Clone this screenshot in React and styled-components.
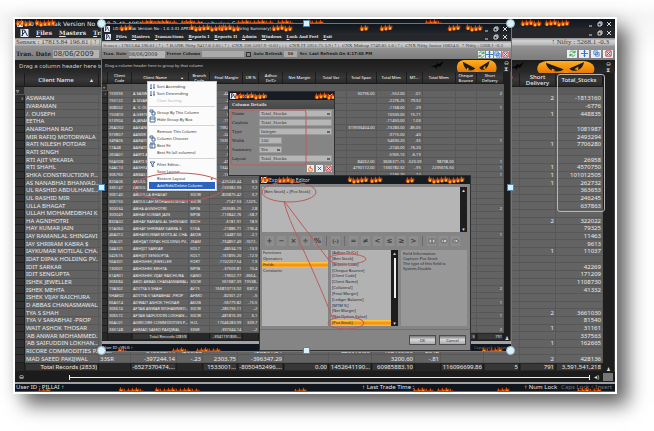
import React from 'react'
import styled, { createGlobalStyle, css } from 'styled-components'

const names = [
    ['A EASWARAN', 'ASWARAN'],
    ['A SIVARAMAN', 'IVARAMAN'],
    ['A. V. OUSEPH', '/. OUSEPH'],
    ['A.GEETHA', 'EETHA'],
    ['A.JANARDHAN RAO', 'ANARDHAN RAO'],
    ['AAKANKSHA SHAH', null],
    ['AAMIR RAFIQ MOTORWALA', 'MIR RAFIQ MOTORWALA'],
    ['AARATI NILESH POTDAR', 'RATI NILESH POTDAR'],
    ['AARATI SINGH', 'RATI SINGH'],
    ['AARTI AJIT VEKARIA', 'RTI AJIT VEKARIA'],
    ['AARTI SHAHL', 'RTI SHAHL'],
    ['AASHKA CONSTRUCTION P...', 'SHKA CONSTRUCTION P...'],
    ['ABBAS NANABHAI BHANVAD...', 'AS NANABHAI BHANVAD...'],
    ['ABDUL RASHID ABDULHAMI...', 'UL RASHID ABDULHAMI...'],
    ['ABDUL RASHID MIR', 'UL RASHID MIR'],
    ['ABDULLA BHAGAT', 'ULLA BHAGAT'],
    ['ABDULLAH MOHAMEDBHAI K...', 'ULLAH MOHAMEDBHAI K...'],
    ['ABHA AGNIHOTRI', 'HA AGNIHOTRI'],
    ['ABHAY KUMAR JAIN', 'HAY KUMAR JAIN'],
    ['ABHAY RAMANLAL SHINGAVI', 'IAY RAMANLAL SHINGAVI'],
    ['ABHAY SHRIRAM KABRA $', 'IAY SHRIRAM KABRA $'],
    ['ABHAYKUMAR MOTILAL CHA...', 'IAYKUMAR MOTILAL CHA...'],
    ['ABHIJAT DIPAK HOLDING PV...', 'IDAT DIPAK HOLDING PV...'],
    ['ABHIJIT SARKAR', 'IDIT SARKAR'],
    ['ABHIJIT SENGUPTA', 'IDIT SENGUPTA'],
    ['ABHISHEK JEWELLER', 'ISHEK JEWELLER'],
    ['ABHISHEK MEHTA', 'ISHEK MEHTA'],
    ['ABHISHEK VIJAY RAICHURA', 'ISHEK VIJAY RAICHURA'],
    ['ABID ABBAS CHANASMAWALA', 'D ABBAS CHANASMAWALA'],
    ['ADITYA S SHAH', 'TYA S SHAH'],
    ['ADITYA V SARABHAI -PROP', 'TYA V SARABHAI -PROP'],
    ['ADWAIT ASHOK THOSAR', 'WAIT ASHOK THOSAR'],
    ['AFTAB ANWAR MOHAMMED...', "'AB ANWAR MOHAMMED..."],
    ['AFTAB SAIFUDDIN LOKHAN...', "'AB SAIFUDDIN LOKHAN..."],
    ['AGRICORE COMMODITIES P...', 'RICORE COMMODITIES P...'],
    ['AHMAD SAEED PAKIJWAL', 'MAD SAEED PAKIJWAL'],
]

const codes = '159393 155122 308002 15G810 513904 26AD02 973R07 34PA06 17A48 26VA01 56AK08 54AC10 306760 820A06 336147 306140 306150 300034 300049 83ZA02 51A060 46A012 26AL01 04A321 042616 56A301 130001 61AR01 306684 19AS02 5HAE02 66A014 306674 306572 66AL01 33K148'.split(' ')
const branches = 'MPIB MPIB COCH COCH MPIB 26AM 97BR PUNE 17AB 26AM 56AM 54AM 30CW 82AB 33SR 30CW 30CW MPIB MPIB 83CH 51KA A6OB 26AM KOLT KOLT FORT MPIB KAND 30CW AV19 AHMD A6OB 30CW 30CW H.O. 33SR'.split(' ')
const margins = '-44976.00 -2814.20 -40116.35 7042.18 -11924.60 1962704.83 -24415.70 1539482.04 -1074.22 -1193.60 -41362.71 13443820.5 -13082.00 -425243.44 -333382.93 -803875.42 -7147.53 -263585.25 -113842.76 -6181.91 -21886.71 -14487.50 -734857.49 -48534.19 -161895.20 -1102207.54 -37509.81 -19602.77 561687.39 166810713.92 -82301.27 -56779.82 -285733.11 -481816.39 17046283.99 -397344.14'.split(' ')
const risks = '.1 .4 .2 1.7 .8 3.1 .4 1.2 .6 2.2 4.1 .9 4.2 8.9 7.2 3.7 -1229.. 2.8 -58.7 18.9 -196.4 -2.1 -1672.. -13.9 -12.9 1.9 10.4 -3664.. 19538.. 687.2 -.5 -15.5 -.2 6.1 309.7 -.2'.split(' ')
const spans = { 0: '30796.00', 5: '319593404.00', 10: '84032.00', 11: '4790172.00' }
const mtms = '-552.00 -2276.25 -1168.00 10500.00 -11450.00 -13283.00 -9715.00 54690.20 -2740.00 -5905.10 3606371.15 1330782.32 1135.20'.split(' ')
const mtPercents = '.01 79.92 .29 15.71 1.03 -85.05 .40 .35 -16.20 -6.19 -523.09 -.95 .12'.split(' ')
const mems = { 10: '98798.00', 11: '2235616.50' }
const innerShort = { 0: 2, 2: 1, 7: 1, 10: 1, 11: 1, 12: 1, 17: 2, 21: 1, 29: 2, 31: 1, 33: 1, 35: 2 }

const stocks = ['-1813160', '-6776', '448835', '', '1081987', '2493294', '7706280', '', '26958', '4570750', '101012505', '262732', '363653', '246245', '637863', '', '322022', '79325', '11463', '9613', '11037', '', '42269', '171209', '1108730', '41332', '', '', '3661030', '81540', '31161', '337563', '162665', '', '428136']
const outerShort = { 0: 2, 2: 1, 6: 1, 9: 1, 10: 1, 11: 1, 16: 2, 20: 1, 28: 2, 30: 1, 32: 1, 34: 2 }
const outerTail = {
    33: ['H.O.', '-343308.14', '-4290.88', '', '128291.84', '', '820970.00', '192195.00', '2312', ''],
    34: ['33SR', '-397244.14', '-.23', '2303.75', '-396347.29', '', '', '3200.60', '-.81', ''],
}

const outerCols = [10, 74, 32, 46, 26, 35, 46, 45, 43, 43, 26, 43, 36, 36, 47]
const innerCols = [6, 24, 57, 21, 33, 16, 24, 33, 30, 30, 30, 16, 33, 21, 27]

const outerRows = names
    .filter(n => n[1])
    .map((n, i) => [i ? '' : '›', n[1], ...(outerTail[i] || Array(10).fill('')), '', outerShort[i], stocks[i]])

const innerRows = names.map((n, i) => [
    i ? '' : '›', codes[i], n[0], branches[i], margins[i], risks[i], '', '', '',
    spans[i], mtms[i], mtPercents[i], mems[i], '', innerShort[i],
])

const outerHeads = ['', 'Client Name', 'Branch Code', 'Final Margin', 'UR %', 'Adhoc Dr/Cr', 'Net Margin', 'Total Var', 'Total Span', 'Total Mtm', 'MT...', 'Total Mem', 'Cheque Bounce', 'Short Delivery', 'Total_Stocks']
const innerHeads = ['', 'Client Code', 'Client Name', 'Branch Code', 'Final Margin', 'UR %', 'Adhoc Dr/Cr', 'Net Margin', 'Total Var', 'Total Span', 'Total Mtm', 'MT...', 'Total Mem', 'Cheque Bounce', 'Short Delivery']
const outerTotals = ['', 'Total Records (2833)', '', '-6527370474....', '', '1533001...', '-8050452496....', '0.00', '1452641190...', '60985883.10', '', '116096699.86', '5', '791', '3,591,541,218']
const innerTotals = ['', '', 'Total Records (2859)', '', '-3941191835....', '', '', '', '', '', '', '', '', '5', '791']

const menuItems = [
    ['Sort Ascending', 'sort'],
    ['Sort Descending', 'sort'],
    ['Clear Sorting', null, 'off'],
    null,
    ['Group By This Column', 'group'],
    ['Hide Group By Box', 'box'],
    null,
    ['Remove This Column'],
    ['Column Chooser', 'group'],
    ['Best Fit', 'fit'],
    ['Best Fit (all columns)'],
    null,
    ['Filter Editor...', 'filter'],
    ['Save Layout'],
    ['Restore Layout'],
    ['Add/Edit/Delete Column', null, 'on'],
]

const fieldNames = ['Adhoc Dr/Cr', 'Ben Stock', 'Branch Code', 'Cheque Bounce', 'Client Code', 'Client Name', 'Collateral', 'Final Margin', 'Ledger Balance', 'MTM %', 'Net Margin', 'Net Option Value', 'Pos Stock']
const operators = ['+', '−', '×', '÷', '%', null, '(-)', null, '=', '≠', '<', '≤', '≥', '>', null, 'and', 'or', 'not']

const Flames = ({ spots, low }) => (
    <FlameLayer aria-hidden="true">
        {spots.map(([x, n]) => (
            <g key={x} transform={`translate(${x} ${low ? 3 : 0})`}>
                {Array.from({ length: n }, (_, i) => {
                    const h = (i * 7 + x) % 4
                    return (
                        <g key={i} transform={`translate(${i * 4} ${h / 2})`}>
                            <path d="M0 5C-1 3 1 3 1 0C3 1 2 3 3 3L4 1C5 4 4 5 3 6H1Z" fill="#d9480b" />
                            <path d="M1 5C1 3 2 4 2 2C3 4 3 4 3 5L2 6Z" fill="#ffc02e" />
                        </g>
                    )
                })}
            </g>
        ))}
    </FlameLayer>
)

const Pumpkin = () => (
    <PumpkinArt viewBox="0 0 60 13" preserveAspectRatio="none" aria-hidden="true">
        <defs>
            <linearGradient id="pumpkin" x2="0" y2="1">
                <stop offset="0" stopColor="#ffb01e" />
                <stop offset="1" stopColor="#e87805" />
            </linearGradient>
        </defs>
        <path d="M3 13C-1 8 2 0 12 0H48C57 0 62 7 58 13Z" fill="url(#pumpkin)" />
        <path d="M10 2L28 9C24 13 12 13 10 2ZM49 1L34 8C37 13 47 11 49 1Z" fill="#1b1c1b" />
        <path d="M16 8l4 2-4 1ZM43 6l-4 3 4 1ZM28 13l2-3 3 3Z" fill="#ef9415" />
    </PumpkinArt>
)

const Bat = () => (
    <BatArt viewBox="0 0 14 9" aria-hidden="true">
        <path d="M0 6L6 4L7 2L9 3L14 0L10 6L8 5L6 8L5 6Z" fill="#050505" />
    </BatArt>
)

const WindowButtons = () => (
    <Captions>
        <button aria-label="Minimize"><svg viewBox="0 0 6 6"><path d="M1 5h3" /></svg></button>
        <button aria-label="Restore"><svg viewBox="0 0 6 6"><path d="M2 2V1h3v3H4M1 2h3v3H1Z" /></svg></button>
        <button aria-label="Close"><svg viewBox="0 0 6 6"><path d="M1 1l4 4M5 1L1 5" /></svg></button>
    </Captions>
)

const toolIcons = [
    ['Refresh', '#2e9b2f', 'M1 3C2 0 5 1 6 2L7 1V3H4M7 5C6 8 3 7 2 6L1 7V5H4'],
    ['Move', '#2467b8', 'M4 0V8M0 4H8M3 2L4 1L5 2M3 6L4 7L5 6'],
    ['Copy', '#4a84cf', 'M1 1H5V5H1ZM3 3H7V7H3ZM4 5H6'],
    ['Exit', '#c6252a', 'M1 1H7V7H1ZM2 2L6 6M6 2L2 6'],
]

const Toolset = ({ small }) => (
    <Tools $small={small}>
        {toolIcons.map(([label, color, d]) => (
            <ToolButton key={label} aria-label={label} $color={color} $large={!small}>
                <svg viewBox="0 0 8 8"><path d={d} /></svg>
            </ToolButton>
        ))}
    </Tools>
)

const DataGrid = ({ cols, heads, rows, totals, left, small }) => (
    <TableBox>
        <Table $small={small}>
            <colgroup>
                {cols.map((w, i) => <Col key={i} $w={w} />)}
            </colgroup>
            <thead>
                <tr>
                    {heads.map((h, i) => (
                        <Head key={i} $small={small}>
                            {h}
                            {h === 'Client Name' && <SortMark>▴</SortMark>}
                        </Head>
                    ))}
                </tr>
                <FilterRow $small={small}>
                    {cols.map((_, i) => <td key={i}>{i ? '' : '▿'}</td>)}
                </FilterRow>
            </thead>
            <tbody>
                {rows.map((row, r) => (
                    <tr key={r}>
                        {row.map((v, i) => <Cell key={i} $mark={!i} $left={left.includes(i)}>{v}</Cell>)}
                    </tr>
                ))}
            </tbody>
            <tfoot>
                <tr>
                    {totals.map((v, i) => <Total key={i} $small={small}>{v && <span>{v}</span>}</Total>)}
                </tr>
            </tfoot>
        </Table>
    </TableBox>
)

const Logo = () => (
    <LogoArt viewBox="0 0 8 8" aria-hidden="true">
        <path d="M0 0H8V8H0Z" fill="#e8eef5" />
        <path d="M1 1H4L7 7M1 7L5 2M2 1V7" stroke="#1d2f55" fill="none" />
    </LogoArt>
)

const Menus = ({ small }) => (
    <MenuBar $small={small}>
        <Logo />
        {['Files', 'Masters', 'Transactions', 'Reports I', 'Reports II', 'Admin', 'Windows', 'Look And Feel', 'Exit'].map(m => (
            <button key={m}><u>{m[0]}</u>{m.slice(1)}</button>
        ))}
        <WindowButtons />
    </MenuBar>
)

const MenuIcon = ({ kind }) => {
    const paths = {
        sort: 'M2 1V6M1 5L2 6L3 5M5 1V3M5 4V6M4 4H6',
        group: 'M1 1H4V3H1ZM3 3H6V6H3Z',
        box: 'M1 1H6V6H1ZM1 3H6',
        fit: 'M1 2H6V6H1ZM3 2V6M1 1H6',
        filter: 'M1 1H6L4 3V6L3 5V3Z',
    }
    return <MenuArt viewBox="0 0 7 7" aria-hidden="true">{kind && <path d={paths[kind]} />}</MenuArt>
}

const ColumnMenu = () => (
    <Popup>
        {menuItems.map((item, i) => item ? (
            <PopupItem key={i} $state={item[2]} disabled={item[2] === 'off'}>
                <MenuIcon kind={item[1]} />
                {item[0]}
                {item[0] === 'Restore Layout' && <Arrow>▸</Arrow>}
            </PopupItem>
        ) : <Rule key={i} />)}
    </Popup>
)

const AddColumn = () => (
    <ColumnDialog>
        <DialogTitle>
            <Logo />
            Add Column
            <WindowButtons />
            <Flames spots={[[6, 2], [17, 5], [86, 5]]} />
        </DialogTitle>
        <Legend>Column Details</Legend>
        <Form>
            <label htmlFor="name">Name</label>
            <Select id="name"><option>Total_Stocks</option></Select>
            <label htmlFor="caption">Caption</label>
            <Input id="caption" defaultValue="Total_Stocks" />
            <label htmlFor="type">Type</label>
            <Select id="type"><option>Integer</option></Select>
            <label htmlFor="width">Width</label>
            <Input id="width" defaultValue="100" $short />
            <label htmlFor="summary">Summary</label>
            <Select id="summary" $short><option>Yes</option></Select>
            <label htmlFor="layout">Layout</label>
            <Select id="layout"><option>Total_Stocks</option></Select>
        </Form>
        <FormActions>
            <ToolButton aria-label="Save" $color="#e0702a"><svg viewBox="0 0 8 8"><path d="M2 7V4L4 1V4H6V7Z" /></svg></ToolButton>
            <ToolButton aria-label="Delete" $color="#d11f24"><svg viewBox="0 0 8 8"><path d="M2 2L6 6M6 2L2 6" /></svg></ToolButton>
            <ToolButton aria-label="Close" $color="#c6252a"><svg viewBox="0 0 8 8"><path d={toolIcons[3][2]} /></svg></ToolButton>
        </FormActions>
    </ColumnDialog>
)

const ExpressionEditor = () => (
    <EditorDialog>
        <DialogTitle>
            <Logo />
            Expression Editor
            <Flames spots={[[1, 2], [18, 4], [88, 5], [110, 3], [146, 2], [168, 9]]} />
        </DialogTitle>
        <ExpressionRow>
            <Expression aria-label="Expression" defaultValue="[Ben Stock] + [Pos Stock]" />
            <ScrollStrip><i>▴</i><i>▾</i></ScrollStrip>
        </ExpressionRow>
        <Operators>
            {operators.map((o, i) => {
                if (!o) return <Divider key={i} />
                return (
                    <OperatorButton key={i} aria-label={o}>
                        {o === 'and' && <svg viewBox="0 0 8 6"><path d="M1 1H4V5H1ZM4 1H7V5H4Z" /></svg>}
                        {o === 'or' && <svg viewBox="0 0 8 6"><circle cx="3" cy="3" r="2" /><circle cx="5" cy="3" r="2" /></svg>}
                        {o === 'not' && <svg viewBox="0 0 8 6"><path d="M1 2H4V1L7 3L4 5V4H1Z" /></svg>}
                        {!['and', 'or', 'not'].includes(o) && o}
                    </OperatorButton>
                )
            })}
        </Operators>
        <Lists>
            <List>
                {['Functions', 'Operators', 'Fields', 'Constants'].map(t => <Option key={t} $on={t === 'Fields'}>{t}</Option>)}
            </List>
            <FieldPane>
                <List>
                    {fieldNames.map(t => <Option key={t} $on={t === 'Pos Stock'}>[{t}]</Option>)}
                </List>
                <ScrollStrip $thumb><i>▴</i><i>▾</i></ScrollStrip>
            </FieldPane>
            <Info>
                <span>Field Information</span>
                <span>Caption: Pos Stock</span>
                <span>The type of this field is:</span>
                <span>System.Double</span>
            </Info>
        </Lists>
        <EditorActions>
            <PushButton>OK</PushButton>
            <PushButton>Cancel</PushButton>
        </EditorActions>
    </EditorDialog>
)

const RiskWindow = () => (
    <InnerWindow>
        <TitleBar $small>
            <Logo />
            LD Rakshak Version No : 1.0.3.41 APEX SOFTCELL - [Risk Monitoring Summary]
            <WindowButtons />
            <Flames spots={[[18, 3], [88, 9], [118, 5], [170, 5], [258, 2], [278, 3], [346, 3], [364, 4]]} />
        </TitleBar>
        <Menus small />
        <Ticker $small>
            <span>Sensex : 17813.84 196.61 | ↑ |</span>
            <span>↑ BANK Nifty 9417.8 2.05 | ↑ |</span>
            <span>CNX 100 5207.9 -0.03 | ↓ |</span>
            <span>CNX IT 5951.75 3.9 | ↑ |</span>
            <span>CNX Midcap 7749.85 1.6 | ↑ |</span>
            <span>CNX Nifty Junior 10824.6</span>
            <span>↑ Nifty : 5268.1 -0.3</span>
        </Ticker>
        <Toolbar $small>
            <label htmlFor="date">Tran. Date</label>
            <DateInput id="date" defaultValue="08/06/2009" $small />
            <label htmlFor="freeze">Freeze Column</label>
            <FreezeSelect id="freeze"><option /></FreezeSelect>
            <Check type="checkbox" id="auto" />
            <label htmlFor="auto">Auto Refresh</label>
            <Seconds id="seconds" defaultValue="10" />
            <label htmlFor="seconds">Sec</label>
            <Refreshed>Last Refresh On 4:17:48 PM</Refreshed>
            <Toolset small />
        </Toolbar>
        <GroupBand $small>
            Drag a column header here to group by that column
            <BandArt $small><Bat /><Pumpkin /></BandArt>
            <BandIcon>⊖<br />⧗</BandIcon>
        </GroupBand>
        <GridArea>
            <DataGrid small cols={innerCols} heads={innerHeads} rows={innerRows} totals={innerTotals} left={[1, 2, 3]} />
            <ScrollStrip $foot><i /><i>♟</i></ScrollStrip>
        </GridArea>
        <Frame $small />
        <StatusBar $small>
            <span>User ID : VELG ↑</span>
            <Dim>Caps Lock ↑ Insert</Dim>
            <Flames low spots={[[16, 2], [70, 4], [94, 6], [250, 3], [380, 5]]} />
        </StatusBar>
        <ColumnMenu />
        <AddColumn />
        <ExpressionEditor />
        <Marks aria-hidden="true">
            <g stroke="#bd5a5a">
                <ellipse cx="77" cy="163" rx="45" ry="14" />
                <ellipse cx="187" cy="168" rx="27" ry="10" />
                <path d="M182 177L226 235M182 177C186 198 210 240 230 293" />
                <ellipse cx="245" cy="235" rx="19" ry="5" />
                <ellipse cx="244" cy="299" rx="18" ry="6" />
                <rect x="129" y="86" width="75" height="55" rx="3" />
            </g>
        </Marks>
        {['0% 0%', '100% 0%', '0% 100%', '100% 100%'].map(p => <Handle key={p} $at={p} $round />)}
        {['50% 0%', '0% 50%', '100% 50%', '50% 100%'].map(p => <Handle key={p} $at={p} />)}
    </InnerWindow>
)

export default function App() {
    return (
        <Page>
            <Global />
            <OuterWindow>
                <TitleBar>
                    <Logo />
                    LD Rakshak Version No : 1.0.3.41 APEX SOFTCELL - [Risk Monitoring Summary]
                    <WindowButtons />
                    <Flames spots={[[1, 4], [20, 5], [126, 9], [166, 5], [222, 9], [262, 4], [292, 4], [410, 4], [506, 5], [530, 6]]} />
                </TitleBar>
                <Menus />
                <Ticker>
                    <span>Sensex : 17813.84 196.61 | ↑ |</span>
                    <span>↑ Nifty : 5268.1 -0.3</span>
                </Ticker>
                <Toolbar>
                    <label htmlFor="tran">Tran. Date</label>
                    <DateInput id="tran" defaultValue="08/06/2009" />
                    <Toolset />
                </Toolbar>
                <GroupBand>
                    Drag a column header here to group by that column
                    <BandArt><Bat /><Pumpkin /></BandArt>
                    <BandIcon>⊖<br />⧗</BandIcon>
                </GroupBand>
                <GridArea>
                    <DataGrid cols={outerCols} heads={outerHeads} rows={outerRows} totals={outerTotals} left={[1, 2]} />
                    <ScrollStrip $wide $foot><i /><i>♟</i></ScrollStrip>
                    <StocksOutline />
                </GridArea>
                <ScrollRow><i>⊖</i><Track /><i>◂)</i><Corner /></ScrollRow>
                <Frame />
                <StatusBar>
                    <span>User ID : PILLAI ↑</span>
                    <Trade>↑ Last Trade Time :</Trade>
                    <span>↑ Num Lock</span>
                    <Dim>Caps Lock ↑ Insert</Dim>
                    <Flames low spots={[[23, 3], [104, 6], [140, 11], [279, 3], [398, 5], [422, 4], [482, 3], [562, 6]]} />
                </StatusBar>
                <RiskWindow />
            </OuterWindow>
        </Page>
    )
}

const Global = createGlobalStyle`
    * {
        box-sizing: border-box;
    }
    body {
        margin: 0;
        background: #fff;
    }
    button, input, select, textarea {
        margin: 0;
        padding: 0;
        border: 0;
        border-radius: 0;
        background: none;
        color: inherit;
        font: inherit;
        appearance: none;
    }
    i {
        font-style: normal;
    }
`

const Page = styled.div`
    display: flex;
    height: 100vh;
    min-height: 431px;
    padding: 17px 37px 37px 13px;
    background: linear-gradient(180deg, #fff, #f6f6f6 16px, #fff 60px);
    font-family: 'Noto Sans', sans-serif;
`

const OuterWindow = styled.main`
    position: relative;
    flex: 1;
    min-width: 0;
    display: flex;
    flex-direction: column;
    border: 2px solid #fff;
    background: #222;
    color: #e4e4e4;
    font-size: 6px;
    line-height: 7px;
    box-shadow: 11px 11px 18px rgba(0, 0, 0, 0.6), 0 0 14px rgba(0, 0, 0, 0.1);
`

const InnerWindow = styled.section`
    position: absolute;
    top: 5px;
    left: 87px;
    right: 104px;
    bottom: 41px;
    display: flex;
    flex-direction: column;
    background: #222;
    font-size: 4px;
    line-height: 5px;
    outline: 1px solid #4d7cb0;
`

const FlameLayer = styled.svg`
    position: absolute;
    inset: 0;
    width: 100%;
    height: 100%;
    pointer-events: none;
`

const PumpkinArt = styled.svg`
    flex: 1;
    min-width: 0;
    height: 100%;
`

const BatArt = styled.svg`
    width: 14px;
    height: 9px;
    flex: none;
`

const LogoArt = styled.svg`
    width: 6px;
    height: 6px;
    flex: none;
`

const Captions = styled.div`
    margin-left: auto;
    display: flex;
    gap: 3px;

    button {
        display: flex;
    }
    svg {
        width: 6px;
        height: 6px;
        fill: none;
        stroke: #d8d8d8;
    }
`

const TitleBar = styled.header`
    position: relative;
    flex: none;
    display: flex;
    align-items: center;
    gap: 3px;
    height: 9px;
    padding: 0 3px 0 2px;
    background: linear-gradient(#11161d, #20242a);
    font-size: ${p => (p.$small ? '4px' : '6px')};
    font-family: 'DejaVu Sans', sans-serif;
    white-space: nowrap;
    overflow: hidden;
`

const MenuBar = styled.nav`
    flex: none;
    display: flex;
    align-items: center;
    gap: ${p => (p.$small ? '5px' : '7px')};
    height: ${p => (p.$small ? '8px' : '10px')};
    padding: 0 3px 0 ${p => (p.$small ? '3px' : '5px')};
    background: #25272a;
    font: bold ${p => (p.$small ? '4px/6px' : '6px/8px')} 'DejaVu Serif', serif;
    white-space: nowrap;

    > ${LogoArt} {
        width: ${p => (p.$small ? '6px' : '9px')};
        height: ${p => (p.$small ? '6px' : '8px')};
    }
`

const Ticker = styled.div`
    flex: none;
    display: flex;
    justify-content: space-between;
    align-items: center;
    height: ${p => (p.$small ? '8px' : '9px')};
    padding: 0 ${p => (p.$small ? '8px' : '6px')} 0 1px;
    background: linear-gradient(#8d8d8d, #d2d2d2 30%, #bcbcbc 70%, #888);
    color: #3d3d3d;
    font-family: 'Liberation Serif', serif;
    font-size: ${p => (p.$small ? '5px' : '7px')};
    white-space: nowrap;
`

const Toolbar = styled.div`
    flex: none;
    display: flex;
    align-items: center;
    gap: 2px;
    height: ${p => (p.$small ? '10px' : '13px')};
    padding: 0 2px 0 1px;
    background: linear-gradient(#919191, #7c7c7c);
    color: #222;
    font: bold ${p => (p.$small ? '4px/6px' : '6px/8px')} 'DejaVu Serif', serif;
    white-space: nowrap;
`

const DateInput = styled.input`
    width: ${p => (p.$small ? '36px' : '46px')};
    height: ${p => (p.$small ? '7px' : '8px')};
    background: #b4b4b4;
    color: #333;
    font: ${p => (p.$small ? '5px' : '7px')} 'DejaVu Sans', sans-serif;
`

const FreezeSelect = styled.select`
    width: 42px;
    height: 6px;
    background: #aaa;
`

const Check = styled.input`
    width: 5px;
    height: 5px;
    border: 1px solid #333;
`

const Seconds = styled.input`
    width: 13px;
    height: 6px;
    padding: 0 3px;
    background: #aaa;
`

const Refreshed = styled.strong`
    font-family: 'DejaVu Sans', sans-serif;
`

const Tools = styled.div`
    margin-left: auto;
    display: flex;
    gap: ${p => (p.$small ? '1px' : '2px')};
`

const ToolButton = styled.button`
    display: flex;
    justify-content: center;
    align-items: center;
    width: ${p => (p.$large ? '10px' : '7px')};
    height: ${p => (p.$large ? '8px' : '7px')};
    background: #e9eef4;

    svg {
        width: 7px;
        height: 7px;
        fill: none;
        stroke: ${p => p.$color};
    }
`

const GroupBand = styled.div`
    position: relative;
    flex: none;
    display: flex;
    align-items: center;
    height: 13px;
    padding: 0 ${p => (p.$small ? '2px' : '4px')} 0 ${p => (p.$small ? '3px' : '4px')};
    background: linear-gradient(#1b1b1b, #2a2a2a);
    color: #ccc;
    font-size: ${p => (p.$small ? '4px' : '6px')};
    white-space: nowrap;
`

const BandArt = styled.div`
    display: flex;
    align-items: center;
    width: ${p => (p.$small ? '67px' : '85px')};
    height: 12px;
    margin: 0 ${p => (p.$small ? '7px' : '11px')} 0 auto;
    gap: 12px;
`

const BandIcon = styled.span`
    font: 6px/6px 'DejaVu Sans', sans-serif;
`

const GridArea = styled.div`
    position: relative;
    flex: 1;
    min-height: 0;
    display: flex;
`

const TableBox = styled.div`
    flex: 1;
    min-width: 0;
`

const Table = styled.table`
    width: 100%;
    height: 100%;
    table-layout: fixed;
    border-collapse: separate;
    border-spacing: 0;
    background: #636363;
    color: #e8e8e8;
    font-size: ${p => (p.$small ? '4px' : '6px')};
    line-height: ${p => (p.$small ? '5px' : '6px')};

    th, td {
        padding: 0 1px;
        overflow: hidden;
        white-space: nowrap;
        border-right: 1px solid #585858;
        border-bottom: 1px solid #575757;
    }
`

const Col = styled.col`
    width: ${p => p.$w}px;
`

const Head = styled.th`
    height: ${p => (p.$small ? '12px' : '14px')};
    font-weight: 500;
    line-height: ${p => (p.$small ? '5px' : '6px')};
    background: linear-gradient(#2b2b2b, #383838 50%, #292929);

    && {
        white-space: normal;
        border-color: #1c1c1c;
    }
`

const SortMark = styled.span`
    float: right;
    margin: 0 4px;
`

const FilterRow = styled.tr`
    height: ${p => (p.$small ? '7px' : '8px')};

    td {
        background: #5b5b5b;
    }
    td:first-child {
        background: #303030;
    }
`

const Cell = styled.td`
    text-align: ${p => (p.$left ? 'left' : 'right')};

    ${p => p.$mark && css`
        background: #303030;
        &&& {
            border-color: #1e1e1e;
        }
    `}
`

const Total = styled.td`
    height: ${p => (p.$small ? '8px' : '9px')};
    background: #272727;
    text-align: right;

    && {
        border-color: #1c1c1c;
    }
    span {
        display: block;
        overflow: hidden;
        background: #373737;
    }
`

const ScrollStrip = styled.div`
    flex: none;
    display: flex;
    flex-direction: column;
    justify-content: space-between;
    align-items: center;
    width: ${p => (p.$wide ? '12px' : '7px')};
    background: ${p => (p.$thumb ? 'linear-gradient(#eee, #eee) 50% 8px / 2px 40px no-repeat, #1d1d1d' : '#1e1e1e')};
    color: #ddd;
    font: 5px/6px 'DejaVu Sans', sans-serif;
    ${p => p.$foot && css`
        border-right: 1px solid #444;
    `}
`

const StocksOutline = styled.div`
    position: absolute;
    top: 1px;
    right: 10px;
    width: 48px;
    height: 138px;
    border: 1px solid #b5b5b5;
    border-radius: 3px;
`

const ScrollRow = styled.div`
    flex: none;
    display: flex;
    align-items: center;
    gap: 4px;
    height: 10px;
    padding: 0 2px 0 4px;
    background: #1c1c1c;
`

const Track = styled.div`
    flex: 1;
    height: 5px;
    margin-left: 41px;
    border: 1px solid #eee;
    border-width: 0 1px;
    background: linear-gradient(#eee, #eee) 0 50% / 100% 1px no-repeat;
`

const Corner = styled.div`
    width: 10px;
    height: 8px;
    background: #777;
`

const Frame = styled.div`
    flex: none;
    height: ${p => (p.$small ? '3px' : '2px')};
    background: #a2a2a2;
`

const StatusBar = styled.footer`
    position: relative;
    flex: none;
    display: flex;
    align-items: center;
    justify-content: flex-end;
    gap: 4px;
    height: ${p => (p.$small ? '7px' : '8px')};
    padding: 0 3px 0 1px;
    background: #11151d;
    border-bottom: ${p => (p.$small ? '0' : '1px solid #38679b')};
    overflow: hidden;
    white-space: nowrap;

    > span:first-child {
        margin-right: auto;
    }
`

const Trade = styled.span`
    margin-right: 106px;
`

const Dim = styled.span`
    color: #777;
`

const Popup = styled.div`
    position: absolute;
    top: 57px;
    left: 45px;
    width: 70px;
    padding: 1px;
    background: #fbfbfb;
    border: 1px solid #c9ccd0;
    color: #333;
`

const PopupItem = styled.button`
    display: flex;
    align-items: center;
    gap: 1px;
    width: 100%;
    height: 7px;
    white-space: nowrap;
    color: ${p => ({ off: '#b5b5b5', on: '#fff' })[p.$state] || '#333'};
    ${p => p.$state === 'on' && css`
        background: #2c63bd;
    `}
`

const Rule = styled.div`
    height: 5px;
    background: linear-gradient(#d4d4d4, #d4d4d4) 0 50% / 100% 1px no-repeat;
`

const MenuArt = styled.svg`
    width: 7px;
    height: 7px;
    fill: none;
    stroke: #4d6a98;
`

const Arrow = styled.span`
    margin: 0 2px 0 auto;
`

const dialog = css`
    position: absolute;
    display: flex;
    flex-direction: column;
    border: 1px solid #2d2f33;
    background: #858585;
`

const ColumnDialog = styled.form`
    ${dialog}
    top: 67px;
    left: 126px;
    width: 107px;
    font: 4px/5px 'DejaVu Serif', serif;
    color: #222;
    padding-bottom: 2px;
`

const EditorDialog = styled.section`
    ${dialog}
    top: 151px;
    left: 157px;
    width: 212px;
    height: 176px;
    color: #2d2430;
`

const DialogTitle = styled.div`
    position: relative;
    flex: none;
    display: flex;
    align-items: center;
    gap: 2px;
    height: 8px;
    padding: 0 1px;
    background: #171b22;
    color: #d9d9d9;
    font: 5px/7px 'Noto Sans', sans-serif;

    button:not(:last-child) {
        display: none;
    }
`

const Legend = styled.strong`
    height: 9px;
    padding: 2px 3px;
    background: linear-gradient(#555, #474747);
    color: #ddd;
`

const Form = styled.div`
    display: grid;
    grid-template-columns: 25px 1fr;
    grid-auto-rows: 7px;
    gap: 2px;
    padding: 1px 2px 2px 3px;
    align-items: center;
`

const field = css`
    width: ${p => (p.$short ? '23px' : '100%')};
    height: 7px;
    padding: 0 1px;
    border: 1px solid #999;
    background: #b6b6b6;
    color: #333;
`

const Input = styled.input`
    ${field}
`

const Select = styled.select`
    ${field}
    background: linear-gradient(#666, #666) right 1px center / 3px 2px no-repeat #b6b6b6;
`

const FormActions = styled.div`
    display: flex;
    justify-content: flex-end;
    gap: 2px;
    padding: 1px 2px;
`

const ExpressionRow = styled.div`
    display: flex;
    height: 45px;
    margin: 3px 3px 0 2px;
`

const Expression = styled.textarea`
    flex: 1;
    padding: 2px;
    background: #b5b5b5;
    resize: none;
    overflow: hidden;
`

const Operators = styled.div`
    display: flex;
    align-items: center;
    gap: 3px;
    padding: 4px 5px;
`

const OperatorButton = styled.button`
    display: flex;
    align-items: center;
    justify-content: center;
    width: 9px;
    height: 10px;
    background: #8e8e8e;
    font: bold 7px/8px 'DejaVu Sans', sans-serif;
    color: #3c3c3c;

    &[aria-label='(-)'] {
        font-size: 5px;
    }
    svg {
        width: 8px;
        height: 6px;
        fill: #ccc;
        stroke: #666;
    }
`

const Divider = styled.div`
    width: 1px;
    height: 10px;
    margin: 0 1px;
    background: #6c6c6c;
`

const Lists = styled.div`
    flex: 1;
    min-height: 0;
    display: grid;
    grid-template-columns: 66px 67px 1fr;
    gap: 3px;
    padding: 0 3px 0 2px;
`

const List = styled.ul`
    flex: 1;
    display: grid;
    grid-template-rows: repeat(13, 1fr);
    margin: 0;
    padding: 0;
    list-style: none;
    background: #b2b2b2;
`

const FieldPane = styled.div`
    display: flex;
`

const Option = styled.li`
    min-height: 0;
    padding-left: 1px;
    ${p => p.$on && css`
        background: linear-gradient(#ffd04a, #f28b10 50%, #ffbd35);
    `}
`

const Info = styled.div`
    display: flex;
    flex-direction: column;
    padding: 1px 2px;
    background: #989898;
`

const EditorActions = styled.div`
    display: flex;
    justify-content: flex-end;
    gap: 3px;
    margin-top: 3px;
    padding: 5px 4px;
    border-top: 1px solid #707070;
`

const PushButton = styled.button`
    width: 27px;
    height: 10px;
    border: 1px solid #4c4c4c;
    background: linear-gradient(#777, #d8d8d8 45%, #aaa);
`

const Marks = styled.svg`
    position: absolute;
    inset: 0;
    width: 100%;
    height: 100%;
    fill: none;
    pointer-events: none;
`

const Handle = styled.span`
    position: absolute;
    left: ${p => p.$at.split(' ')[0]};
    top: ${p => p.$at.split(' ')[1]};
    width: ${p => (p.$round ? '9px' : '7px')};
    height: ${p => (p.$round ? '9px' : '7px')};
    margin: ${p => (p.$round ? '-5px' : '-4px')};
    border: 1px solid ${p => (p.$round ? '#9db9c6' : '#4c87b5')};
    border-radius: ${p => (p.$round ? '50%' : '0')};
    background: #d9f1f8;
`
